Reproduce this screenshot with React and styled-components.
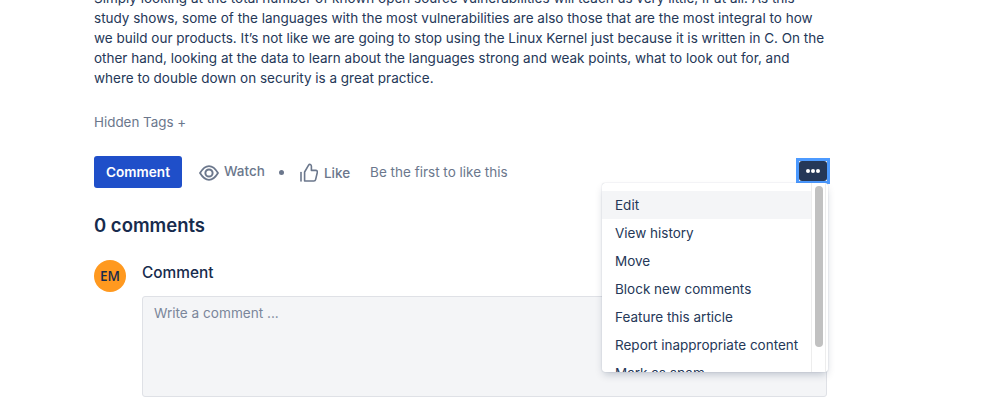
import React from "react";
import styled, { createGlobalStyle } from "styled-components";

const Global = createGlobalStyle`
  html, body { margin: 0; padding: 0; background: #fff; }
  body { width: 998px; height: 413px; overflow: hidden; font-family: Inter, "Liberation Sans", sans-serif; }
`;

const Page = styled.div`
  position: relative;
  width: 998px;
  height: 413px;
  overflow: hidden;
  padding: 0 170px 0 94px;
  box-sizing: border-box;
`;

const Article = styled.p`
  margin: -12px 0 0;
  font-size: 13.5px;
  line-height: 20px;
  color: #253858;
  white-space: nowrap;
`;

const HiddenTags = styled.div`
  margin-top: 24px;
  font-size: 13.4px;
  line-height: 20px;
  color: #6b778c;
`;

const Actions = styled.div`
  display: flex;
  align-items: center;
  height: 32px;
  margin-top: 24px;
  font-size: 13.5px;
  color: #6b778c;
`;

const PrimaryButton = styled.button`
  width: 88px;
  height: 32px;
  border: 0;
  border-radius: 3px;
  background: #1f4fc9;
  color: #fff;
  font: 600 13.6px Inter, sans-serif;
  padding: 0;
`;

const Action = styled.span`
  display: flex;
  align-items: center;
  gap: ${(p) => p.$gap}px;
  margin-left: ${(p) => p.$left}px;
  font-weight: 500;
  & > span { position: relative; top: ${(p) => p.$shift}px; }
  & > svg { position: relative; top: ${(p) => p.$iconShift}px; flex: none; }
`;

const Dot = styled.span`
  width: 5px;
  height: 5px;
  border-radius: 50%;
  background: #6b778c;
  margin-left: 14px;
`;

const LikeNote = styled.span`
  margin-left: 20px;
`;

const MoreFrame = styled.div`
  margin-left: auto;
  margin-right: -2px;
  width: 34px;
  height: 26px;
  box-sizing: border-box;
  border: 3px solid #4c9aff;
  background: #fff;
  position: relative;
  top: -1px;
`;

const MoreButton = styled.div`
  width: 100%;
  height: 100%;
  border-radius: 3px;
  background: #253858;
  display: flex;
  align-items: center;
  justify-content: center;
  gap: 1px;
`;

const MoreDot = styled.span`
  width: 4px;
  height: 4px;
  border-radius: 50%;
  background: #fff;
`;

const CommentsTitle = styled.h2`
  margin: 24px 0 0;
  font-size: 18.5px;
  line-height: 26px;
  font-weight: 600;
  color: #172b4d;
`;

const CommentRow = styled.div`
  display: flex;
  gap: 16px;
  margin-top: 22px;
`;

const Avatar = styled.div`
  flex: none;
  width: 32px;
  height: 32px;
  border-radius: 50%;
  background: #ff991f;
  color: #172b4d;
  font: 600 13.5px/32px "Open Sans", sans-serif;
  text-align: center;
`;

const CommentBody = styled.div`
  flex: 1;
`;

const CommentLabel = styled.div`
  font-size: 15.4px;
  font-weight: 500;
  line-height: 26px;
  margin-bottom: -2px;
  color: #172b4d;
`;

const Field = styled.div`
  margin-top: 12px;
  width: 685px;
  height: 101px;
  box-sizing: border-box;
  padding: 6px 11px;
  background: #f4f5f7;
  border: 1px solid #dfe1e6;
  border-radius: 3px;
  font-size: 13.6px;
  line-height: 20px;
  color: #7a869a;
`;

const Menu = styled.div`
  position: absolute;
  left: 602px;
  top: 183px;
  width: 226px;
  height: 189px;
  padding-top: 8px;
  box-sizing: border-box;
  overflow: hidden;
  background: #fff;
  border-radius: 3px;
  box-shadow: 0 4px 8px -2px rgba(9, 30, 66, 0.25), 0 0 1px rgba(9, 30, 66, 0.31);
`;

const MenuItem = styled.div`
  width: 209px;
  height: 28px;
  box-sizing: border-box;
  padding-left: 13px;
  font-size: 13.5px;
  line-height: 28px;
  color: #253858;
  white-space: nowrap;
  background: ${(p) => (p.$active ? "#f4f5f7" : "transparent")};
`;

const ScrollTrack = styled.div`
  position: absolute;
  top: 0;
  left: 209px;
  width: 15px;
  height: 100%;
  background: #fff;
  border-left: 1px solid #ededed;
  border-right: 1px solid #ededed;
  box-sizing: border-box;
`;

const ScrollThumb = styled.div`
  position: absolute;
  left: 3px;
  top: 3px;
  width: 8px;
  height: 161px;
  border-radius: 4px;
  background: #c1c1c1;
`;

const EyeIcon = () => (
  <svg width="20" height="16" viewBox="0 0 20 16" fill="none" stroke="#6b778c" aria-hidden="true">
    <path d="M1 8C3.8 3.4 6.8 1.1 10 1.1C13.2 1.1 16.2 3.4 19 8C16.2 12.6 13.2 14.9 10 14.9C6.8 14.9 3.8 12.6 1 8Z" strokeWidth="1.8" strokeLinejoin="round" />
    <circle cx="10" cy="8" r="3.6" strokeWidth="2" />
  </svg>
);

const ThumbIcon = () => (
  <svg width="18" height="19" viewBox="0 0 18 19" fill="none" stroke="#6b778c" strokeWidth="1.6" strokeLinejoin="round" strokeLinecap="round" aria-hidden="true">
    <path d="M1 9.5V18" />
    <path d="M4.6 18V9L8.6 2.2C9.4 0.8 11.4 1.2 11.4 3.2V7.4H15.8C17 7.4 17.6 8.4 17.3 9.5L15.6 16.6C15.4 17.5 14.8 18 13.9 18Z" />
  </svg>
);

const items = ["Edit", "View history", "Move", "Block new comments", "Feature this article", "Report inappropriate content", "Mark as spam"];

export default function App() {
  return (
    <Page>
      <Global />
      <Article>
        Simply looking at the total number of known open source vulnerabilities will teach us very little, if at all. As this<br />
        study shows, some of the languages with the most vulnerabilities are also those that are the most integral to how<br />
        we build our products. It’s not like we are going to stop using the Linux Kernel just because it is written in C. On the<br />
        other hand, looking at the data to learn about the languages strong and weak points, what to look out for, and<br />
        where to double down on security is a great practice.
      </Article>
      <HiddenTags>Hidden Tags +</HiddenTags>
      <Actions>
        <PrimaryButton>Comment</PrimaryButton>
        <Action $left={17} $gap={5} $shift={-1} $iconShift={1}>
          <EyeIcon />
          <span>Watch</span>
        </Action>
        <Dot />
        <Action $left={16} $gap={6} $shift={1} $iconShift={0}>
          <ThumbIcon />
          <span>Like</span>
        </Action>
        <LikeNote>Be the first to like this</LikeNote>
        <MoreFrame>
          <MoreButton>
            <MoreDot /><MoreDot /><MoreDot />
          </MoreButton>
        </MoreFrame>
      </Actions>
      <CommentsTitle>0 comments</CommentsTitle>
      <CommentRow>
        <Avatar>EM</Avatar>
        <CommentBody>
          <CommentLabel>Comment</CommentLabel>
          <Field>Write a comment ...</Field>
        </CommentBody>
      </CommentRow>
      <Menu>
        {items.map((t, i) => (
          <MenuItem key={t} $active={i === 0}>{t}</MenuItem>
        ))}
        <ScrollTrack><ScrollThumb /></ScrollTrack>
      </Menu>
    </Page>
  );
}
